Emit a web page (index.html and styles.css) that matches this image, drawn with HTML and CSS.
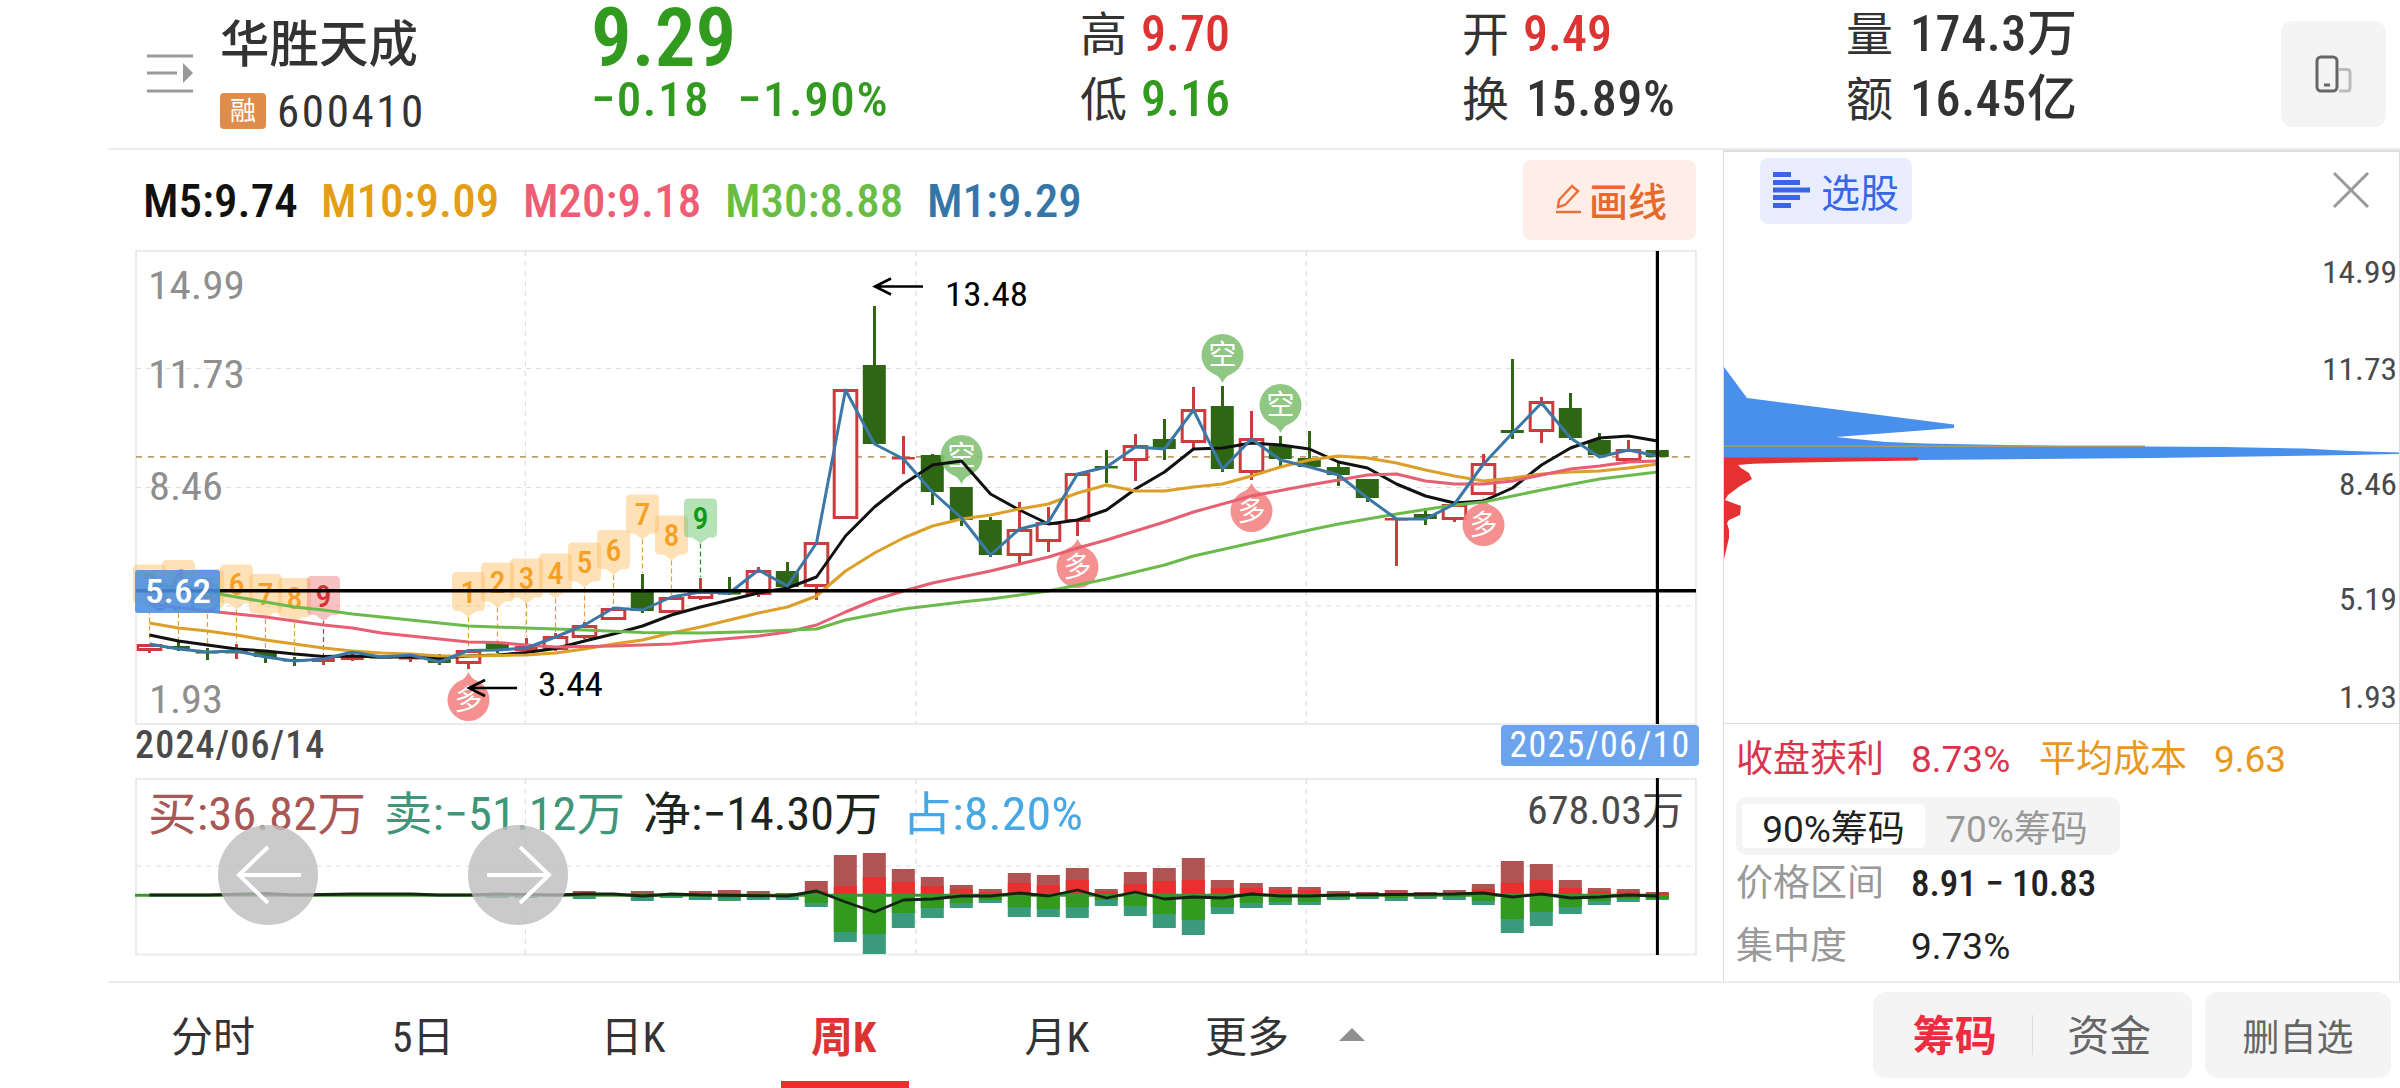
FILE: index.html
```html
<!DOCTYPE html>
<html lang="zh-CN">
    <head>
        <meta charset="UTF-8">
        <meta name="viewport" content="width=device-width, initial-scale=1.0">
        <title>华胜天成 600410</title>
        <link rel="stylesheet" href="styles.css">
    </head>
    <body>
        <div id="App">
            <header class="Header">
                <svg class="MenuIcon" viewBox="0 0 46 40">
                    <path d="M0 3H46M0 20H30M0 38H46" stroke="#999999" stroke-width="3"/>
                    <path d="M36 10L46 20L36 30Z" fill="#999999"/>
                </svg>
                <div class="Stock">
                    <h1 class="Name">华胜天成</h1>
                    <div class="Code"><span class="Tag">融</span><span>600410</span></div>
                </div>
                <div class="Price Down">
                    <div class="Last">9.29</div>
                    <div class="Change"><span>−0.18</span><span>−1.90%</span></div>
                </div>
                <div class="Stat">
                    <div><label>高</label><b class="Up">9.70</b></div>
                    <div><label>低</label><b class="Down">9.16</b></div>
                </div>
                <div class="Stat">
                    <div><label>开</label><b class="Up">9.49</b></div>
                    <div><label>换</label><b class="Wide">15.89%</b></div>
                </div>
                <div class="Stat">
                    <div><label>量</label><b class="Wide">174.3万</b></div>
                    <div><label>额</label><b class="Wide">16.45亿</b></div>
                </div>
                <button class="Rotate">
                    <svg width="38" height="38" viewBox="0 0 38 38" fill="none">
                        <path d="M24 14.5H32Q35 14.5 35 17.5V33Q35 36 32 36H24" stroke="#bbbbbb" stroke-width="3"/>
                        <rect x="2" y="2" width="20" height="34" rx="4" stroke="#666666" stroke-width="3"/>
                        <path d="M9 30H15" stroke="#666666" stroke-width="3"/>
                    </svg>
                </button>
            </header>
            <main class="Main">
                <section class="Left">
                    <div class="Averages">
                        <span class="M5">M5:9.74</span>
                        <span class="M10">M10:9.09</span>
                        <span class="M20">M20:9.18</span>
                        <span class="M30">M30:8.88</span>
                        <span class="M1">M1:9.29</span>
                        <button class="Draw">
                            <svg width="28" height="32" viewBox="0 0 28 32" fill="none" stroke="#e9713a" stroke-width="2.5">
                                <path d="M4 24L5 17L18 3L24 8L11 22Z"/>
                                <path d="M2 29H27"/>
                            </svg>
                            画线
                        </button>
                    </div>
                    <svg id="KChart" class="KChart" viewBox="132 250 1570 475"></svg>
                    <div class="Dates">
                        <span class="From">2024/06/14</span>
                        <span class="To">2025/06/10</span>
                    </div>
                    <svg id="Volume" class="Volume" viewBox="132 777 1570 180"></svg>
                </section>
                <aside class="Chips">
                    <div class="ChipsHead">
                        <button class="Pick">
                            <svg width="38" height="36" viewBox="0 0 38 36" stroke="#3a66e6" stroke-width="5">
                                <path d="M0 2.5H18M0 10.5H27M0 18H37M0 25.5H27M0 33.5H18"/>
                            </svg>
                            选股
                        </button>
                        <svg class="Close" width="38" height="38" viewBox="0 0 38 38">
                            <path d="M2 2L36 36M36 2L2 36" stroke="#999999" stroke-width="3"/>
                        </svg>
                    </div>
                    <svg id="Spread" class="Spread" viewBox="1724 240 675 483"></svg>
                    <div class="ChipsInfo">
                        <div class="Row">
                            <span class="Key Profit">收盘获利</span><span class="Value Profit">8.73%</span>
                            <span class="Key Cost">平均成本</span><span class="Value Cost">9.63</span>
                        </div>
                        <div class="Segment">
                            <span class="Active">90%筹码</span>
                            <span>70%筹码</span>
                        </div>
                        <div class="Row Range">
                            <span class="Key">价格区间</span><span class="Value Strong">8.91 − 10.83</span>
                        </div>
                        <div class="Row Focus">
                            <span class="Key">集中度</span><span class="Value">9.73%</span>
                        </div>
                    </div>
                </aside>
            </main>
            <footer class="Footer">
                <nav class="Tabs">
                    <a>分时</a>
                    <a>5日</a>
                    <a>日K</a>
                    <a class="Selected">周K</a>
                    <a class="Month">月K</a>
                    <a>更多</a>
                    <i class="Caret"></i>
                </nav>
                <div class="Switch">
                    <span class="On">筹码</span>
                    <span>资金</span>
                </div>
                <button class="Remove">删自选</button>
            </footer>
        </div>
        <script src="chart.js"></script>
    </body>
</html>
```

FILE: styles.css
```css
* {
    box-sizing: border-box;
    margin: 0px;
    padding: 0px;
}
body {
    background-color: #FFFFFF;
    color: #333333;
    font-family: Roboto, "Noto Sans CJK SC", sans-serif;
    font-stretch: 87%;
    overflow: hidden;
}
button {
    align-items: center;
    border: none;
    display: flex;
    font-family: inherit;
    justify-content: center;
}
svg {
    display: block;
    flex-shrink: 0;
}
svg text {
    font-family: Roboto, "Noto Sans CJK SC", sans-serif;
}
#App {
    display: flex;
    flex-direction: column;
    height: 1088px;
    width: 2400px;
}
.Up {
    color: #DD3333;
}
.Down {
    color: #319A1F;
}
.Header {
    display: grid;
    grid-template-columns: 73px 371px 489px 382px 384px 435px 105px;
    height: 148px;
    padding-left: 147px;
    .MenuIcon {
        height: 40px;
        margin-top: 53px;
        width: 46px;
    }
    .Name {
        font-size: 49.5px;
        font-weight: 500;
        line-height: 60px;
        padding-top: 15px;
    }
    .Code {
        align-items: center;
        display: flex;
        font-size: 45px;
        gap: 11px;
        height: 72px;
        letter-spacing: 2.6px;
    }
    .Tag {
        background-color: #E08C4A;
        border-radius: 4px;
        color: #FFFFFF;
        font-size: 26px;
        height: 36px;
        letter-spacing: 0px;
        line-height: 36px;
        text-align: center;
        width: 46px;
    }
    .Price {
        font-weight: 500;
    }
    .Last {
        font-size: 81px;
        font-stretch: 83%;
        font-weight: 600;
        line-height: 77px;
    }
    .Change {
        display: flex;
        font-size: 49px;
        gap: 27px;
        letter-spacing: 1.6px;
        line-height: 46px;
    }
    .Stat {
        font-size: 50px;
        line-height: 65px;
        padding-top: 2px;
        div {
            display: flex;
        }
        label {
            font-size: 47px;
            width: 61px;
        }
        b {
            font-weight: 500;
        }
        .Wide {
            letter-spacing: 0.6px;
            padding-left: 3px;
        }
    }
    .Rotate {
        background-color: #F4F4F4;
        border-radius: 12px;
        height: 106px;
        margin-top: 21px;
        svg {
            margin-top: -1px;
        }
    }
}
.Main {
    border-bottom: 2px solid #ECECEC;
    border-top: 2px solid #ECECEC;
    display: flex;
    height: 835px;
    margin-left: 108px;
}
.Left {
    width: 1615px;
}
.Averages {
    align-items: center;
    display: grid;
    font-size: 47px;
    font-weight: 500;
    grid-template-columns: 178px 202px 202px 202px 596px 173px;
    height: 100px;
    padding-left: 35px;
    .M5 {
        color: #111111;
    }
    .M10 {
        color: #E49E14;
    }
    .M20 {
        color: #EE5D73;
    }
    .M30 {
        color: #69BD45;
    }
    .M1 {
        color: #3476A8;
    }
    .Draw {
        background-color: #FFEEE8;
        border-radius: 8px;
        color: #E66A2C;
        font-size: 39px;
        font-weight: 500;
        gap: 7px;
        height: 80px;
        padding: 0px 0px 3px 2px;
    }
}
.KChart {
    height: 475px;
    margin-left: 24px;
    width: 1570px;
}
.Dates {
    display: flex;
    font-size: 38px;
    height: 52px;
    justify-content: space-between;
    letter-spacing: 1.2px;
    line-height: 41px;
    padding: 0px 24px 0px 27px;
    .From {
        color: #4A4A4A;
        font-weight: 500;
    }
    .To {
        background-color: #6BA3EC;
        border-radius: 4px;
        color: #FFFFFF;
        font-size: 36px;
        height: 41px;
        text-align: center;
        width: 198px;
    }
}
.Volume {
    height: 180px;
    margin-left: 24px;
    width: 1570px;
}
.Chips {
    border: 1px solid #DCDCDC;
    border-bottom: none;
    border-top-width: 2px;
    display: flex;
    flex-direction: column;
    width: 677px;
}
.ChipsHead {
    display: flex;
    height: 88px;
    justify-content: space-between;
    padding: 6px 29px 0px 36px;
    .Pick {
        background-color: #E8EEFF;
        border-radius: 8px;
        color: #3A66E6;
        font-size: 39px;
        gap: 10px;
        height: 66px;
        padding-bottom: 2px;
        width: 152px;
    }
    .Close {
        margin-top: 13px;
    }
}
.Spread {
    height: 483px;
    width: 675px;
}
.ChipsInfo {
    border-top: 1px solid #DCDCDC;
    display: flex;
    flex: 1;
    flex-direction: column;
    font-size: 37px;
    padding: 4px 0px 0px 12px;
    .Row {
        display: flex;
        height: 64px;
        line-height: 64px;
    }
    .Range {
        height: 56px;
        line-height: 58px;
    }
    .Focus {
        height: 70px;
        line-height: 72px;
    }
    .Key {
        color: #999999;
        width: 175px;
    }
    .Value {
        color: #222222;
        font-stretch: 100%;
        width: 128px;
    }
    .Strong {
        font-stretch: 87%;
        font-weight: 500;
        white-space: nowrap;
    }
    .Profit {
        color: #D9344B;
    }
    .Cost {
        color: #E9981F;
    }
    .Segment {
        background-color: #F4F4F4;
        border-radius: 10px;
        color: #999999;
        display: flex;
        font-stretch: 100%;
        height: 58px;
        line-height: 52px;
        margin-top: 5px;
        padding: 7px 6px;
        width: 384px;
        span {
            border-radius: 4px;
            flex: 1;
            height: 44px;
            padding-right: 6px;
            text-align: center;
            white-space: nowrap;
        }
        .Active {
            background-color: #FFFFFF;
            color: #222222;
            padding: 0px;
        }
    }
}
.Footer {
    display: flex;
    font-size: 42px;
    height: 105px;
    padding-left: 168px;
    .Tabs {
        align-items: flex-start;
        display: flex;
        width: 1705px;
        a {
            height: 105px;
            line-height: 109px;
            margin-right: 120px;
            text-align: center;
            white-space: nowrap;
            width: 90px;
        }
        .Selected {
            border-bottom: 7px solid #E93030;
            color: #DD3333;
            font-weight: 700;
            margin: 0px 103px 0px -17px;
            padding-right: 3px;
            width: 128px;
        }
        .Month {
            margin-right: 100px;
        }
    }
    .Caret {
        border-bottom: 13px solid #909090;
        border-left: 13px solid transparent;
        border-right: 13px solid transparent;
        margin: 45px 0px 0px -73px;
    }
    .Switch {
        background-color: #F4F4F4;
        border-radius: 13px;
        color: #666666;
        display: flex;
        height: 86px;
        margin-top: 9px;
        padding: 23px 0px;
        width: 319px;
        span {
            flex: 1;
            height: 40px;
            line-height: 44px;
            padding-right: 6px;
            text-align: center;
        }
        .On {
            border-right: 1px solid #DDDDDD;
            color: #EF2B40;
            font-weight: 700;
            padding: 0px 0px 0px 5px;
        }
    }
    .Remove {
        background-color: #F4F4F4;
        border-radius: 13px;
        color: #666666;
        font-size: 37px;
        height: 86px;
        margin: 9px 0px 0px 13px;
        width: 186px;
    }
}
```

FILE: chart.js
```js
const KChart = document.querySelector('#KChart');
const Volume = document.querySelector('#Volume');
const Spread = document.querySelector('#Spread');
const Red = '#cb3c3c';
const Green = '#2f6613';
const X = (Index) => 149.5 + Index * 29;

// [color, body top, body bottom, high, low]
const Candles = [
    ['r',644,651,644,653],['g',646,649,642,651],['g',651,653,648,660],['r',651,653,644,659],['g',652,657,651,663],
    ['g',659,661,657,666],['r',658,662,657,665],['r',656,660,651,661],['g',656,658,656,658],['r',657,659,655,662],
    ['g',657,663,654,665],['r',650,664,650,669],['g',642,650,642,653],['r',646,651,638,651],['r',636,650,633,651],
    ['r',625,638,622,639],['r',608,620,608,620],['g',591,611,574,613],['r',597,613,596,613],['r',591,599,578,600],
    ['g',592,594,577,595],['r',570,595,567,597],['g',571,587,562,587],['r',542,587,542,600],['r',389,519,389,519],
    ['g',365,444,306,444],['r',457,459,436,474],['g',455,492,454,505],['g',487,520,487,526],['g',520,555,517,557],
    ['r',529,556,502,564],['r',522,542,507,552],['r',473,522,473,536],['g',466,468,450,483],['r',445,461,434,481],
    ['g',439,449,419,460],['r',409,443,387,448],['g',406,469,386,472],['r',438,473,411,480],['g',446,459,436,466],
    ['g',458,467,431,467],['g',467,475,463,486],['g',479,498,479,502],['r',518,520,518,566],['g',514,519,508,525],
    ['r',504,520,504,522],['r',463,495,454,495],['g',430,433,359,439],['r',401,432,397,443],['g',408,438,393,440],
    ['g',440,455,433,455],['r',449,461,440,461],['g',450,457,450,457]
];
// y of each average line: every point is [index, y]
const M5 = [635,641,645,649,651,654,656.5,656,657,657,658,656,655,652.5,648.5,641,634,626,615,607,600,593,588,577,536,507,484,465,461,494,510,524,520,510,489,472,449,448,443,445,449,462,468,484,496,503,501,488,465,448,438,436,441].map((Y, I) => [I, Y]);
const M10 = [623,628,631,635,640,644,648,651,653,654,656,656,655.5,655,653,649,644,640,633,627,620,613,607,596,571,553,538,526,519,515,509,504,493,485,491,491,487,484,476,467,460,456,458,463,470,476,481,478,474,472,471,468,464].map((Y, I) => [I, Y]);
const M20 = [[0,604],[2,611],[3,614],[4,617],[5,621],[6,625],[7,628],[8,633],[9,636],[11,642],[12,642.5],[13,645],[14,647],[16,646],[18,644],[19,641],[21,636],[22,632],[23,625],[24,612],[25,600],[26,591],[27,583],[29,571],[31,557],[32,548],[33,540],[35,522],[36,512],[38,496],[40,485],[41,480],[42,475],[43,474],[44,481],[45,484],[46,484],[47,481],[48,475],[49,469],[50,466],[51,462],[52,461]];
const M30 = [[0,584],[2,592],[3,597],[4,602],[5,607],[6,610],[7,614],[9,620],[11,626],[13,628],[15,630],[17,632.5],[19,633],[21,631.5],[23,629],[24,620],[26,609],[28,602],[29,599],[31,591],[33,579],[35,565],[36,556],[38,543],[40,530],[41,524],[43,514],[45,505],[46,502],[48,490],[50,479],[52,472]];
const M1 = [644,649,652,651,657,661,659,652,657,655,662,650.5,650,648,637,625,608,610,597,592,593,570,586,543,390,444,459,492,518,555,529,522,474,467,447,449,410,469,439,460,467,475,498,519,519,504,464,433,403,438,457,450,456].map((Y, I) => [I, Y]);
// [index, digit, top, stem end, kind]
const Tags = [
    [0,3,564.5,642,'o'],[1,4,560,641,'o'],[2,5,569,647,'o'],[3,6,564.5,643,'o'],[4,7,574,650,'o'],[5,8,578,656,'o'],[6,9,576,656,'r'],
    [11,1,572,650,'o'],[12,2,562.5,641,'o'],[13,3,558.5,637,'o'],[14,4,553.5,632,'o'],[15,5,542.5,621,'o'],[16,6,530,607,'o'],[17,7,494.5,573,'o'],[18,8,515.5,595,'o'],[19,9,498.5,577,'g']
];
const TagColors = { o: ['#ffc069', '#f5a127', '#e0a234'], r: ['#f08080', '#d93030', '#cc3344'], g: ['#67c26a', '#119a11', '#2a8a2a'] };
// [index, center y, side]
const Signals = [[11,700,'多'],[32,567,'多'],[38,511,'多'],[46,525,'多'],[28,456,'空'],[37,355,'空'],[39,405,'空']];
// [index, dark red top, red top, green bottom, teal bottom]
const Bars = [
    [12,894,894,896,898],[13,894,894,896,898],[15,891,893,896,899],[17,891,893,897,901],[18,894,894,896,898],[19,891,893,897,900],[20,890,893,898,901],[21,891,893,897,900],[22,893,893,896,900],
    [23,881,891,903,907],[24,855,886,932,942],[25,853,877,934,954],[26,869,882,913,928],[27,877,886,908,918],[28,885,889,903,908],[29,889,892,900,903],
    [30,873,883,907,917],[31,875,885,909,917],[32,868,880,907,918],[33,889,892,900,906],[34,872,884,906,916],[35,868,881,914,928],[36,858,880,920,935],
    [37,880,888,907,914],[38,883,888,903,908],[39,887,890,902,905],[40,887,890,902,905],[41,891,893,898,900],[42,892,893,897,899],[43,890,893,898,901],
    [44,892,893,897,899],[45,890,893,897,900],[46,884,889,901,905],[47,861,883,919,933],[48,864,880,912,926],[49,880,888,907,914],[50,888,891,901,905],[51,889,892,899,902],[52,892,893,899,900]
];
const Net = [[0,895],[2,895],[4,893.5],[5,895],[7,894],[9,894],[10,895],[11,895],[12,894],[14,895],[15,894],[16,894],[17,896],[18,894],[19,895],[22,896],[23,891],[24,902],[25,912],[26,900],[27,899],[28,896],[29,896],[30,893],[31,896],[32,890],[33,898],[34,892],[35,899],[36,897],[37,898],[38,894],[39,896],[40,896],[41,895],[45,894],[46,893],[47,897],[48,894],[49,898],[50,897],[51,895],[52,896]];

const Line = (X1, Y1, X2, Y2, Color, Width, Dash = '') =>
    `<line x1="${X1}" y1="${Y1}" x2="${X2}" y2="${Y2}" stroke="${Color}" stroke-width="${Width}" stroke-dasharray="${Dash}"/>`;
const Rect = (Left, Top, Width, Height, Color) =>
    `<rect x="${Left}" y="${Top}" width="${Width}" height="${Height}" fill="${Color}"/>`;
const Text = (Left, Base, Size, Width, Color, Value, Weight = 400) =>
    `<text x="${Left}" y="${Base}" font-size="${Size}" fill="${Color}" font-weight="${Weight}" textLength="${Width}" lengthAdjust="spacingAndGlyphs">${Value}</text>`;
const Poly = (Points, Color, Width = 3) =>
    `<polyline points="${Points.map(([I, Y]) => X(I) + ',' + Y).join(' ')}" fill="none" stroke="${Color}" stroke-width="${Width}" stroke-linejoin="round"/>`;
const Grid = (Top, Bottom, Rows) => {
    let Out = '';
    [525.3, 916, 1306.3].forEach((Col) => { Out += Line(Col, Top, Col, Bottom, '#dddddd', 1.2, '5 5'); });
    Rows.forEach((Row) => { Out += Line(136, Row, 1696, Row, '#dddddd', 1.2, '5 5'); });
    return Out + `<rect x="136" y="${Top}" width="1560" height="${Bottom - Top}" fill="none" stroke="#ebebeb" stroke-width="2"/>`;
};

const DrawKChart = () => {
    let Out = Grid(251, 724, [368.5, 487.5, 606]);
    Out += Line(136, 456.8, 1696, 456.8, '#bf9f6c', 1.8, '6 6');
    Out += Text(148, 299, 39, 97, '#8f8f8f', '14.99') + Text(148, 388, 39, 97, '#8f8f8f', '11.73');
    Out += Text(149, 500, 39, 74, '#8f8f8f', '8.46') + Text(149, 611, 39, 74, '#8f8f8f', '5.19') + Text(149, 713, 39, 74, '#8f8f8f', '1.93');
    Candles.forEach(([Kind, Top, Bottom, High, Low], I) => {
        let Color = Kind === 'r' ? Red : Green;
        Out += Line(X(I), High, X(I), Top, Color, 3) + Line(X(I), Bottom, X(I), Low, Color, 3);
        if (Kind === 'g' || Bottom - Top < 6) {
            Out += Rect(X(I) - 11.7, Top, 23, Math.max(Bottom - Top, 2.5), Color);
        } else {
            Out += `<rect x="${X(I) - 11.3}" y="${Top + 1.5}" width="22.6" height="${Bottom - Top - 3}" fill="#ffffff" stroke="${Color}" stroke-width="3"/>`;
        }
    });
    Tags.forEach(([I, Digit, Top, End, Kind]) => {
        let [Fill, Ink, Stem] = TagColors[Kind];
        let C = X(I);
        Out += Line(C, Top + 45, C, End, Stem, 1.2, '5 3');
        Out += `<path d="M${C - 12} ${Top}H${C + 12}Q${C + 16.5} ${Top} ${C + 16.5} ${Top + 5}V${Top + 34}Q${C + 16.5} ${Top + 39} ${C + 12} ${Top + 39}H${C + 8}L${C} ${Top + 45}L${C - 8} ${Top + 39}H${C - 12}Q${C - 16.5} ${Top + 39} ${C - 16.5} ${Top + 34}V${Top + 5}Q${C - 16.5} ${Top} ${C - 12} ${Top}Z" fill="${Fill}" opacity="0.48"/>`;
        Out += `<text x="${C}" y="${Top + 30.5}" font-size="32" font-weight="500" fill="${Ink}" text-anchor="middle">${Digit}</text>`;
    });
    Signals.forEach(([I, Y, Side]) => {
        let C = X(I);
        let Dir = Side === '多' ? -1 : 1;
        let Fill = Side === '多' ? '#f58484' : '#83c276';
        Out += `<g opacity="0.9"><circle cx="${C}" cy="${Y}" r="21" fill="${Fill}"/>`;
        Out += `<path d="M${C - 11} ${Y + Dir * 17}Q${C - 3} ${Y + Dir * 21} ${C} ${Y + Dir * 28}Q${C + 3} ${Y + Dir * 21} ${C + 11} ${Y + Dir * 17}Z" fill="${Fill}"/>`;
        Out += `<text x="${C}" y="${Y + 10}" font-size="28" fill="#ffffff" text-anchor="middle">${Side}</text></g>`;
    });
    Out += Poly(M5, '#111111') + Poly(M10, '#dca02a') + Poly(M20, '#e65f72') + Poly(M30, '#6cba4c') + Poly(M1, '#3b78a6');
    Out += '<path d="M923 286.5H875M891 278.5L875 286.5L891 294.5M517 688H469M485 680L469 688L485 696" fill="none" stroke="#000000" stroke-width="2.6"/>';
    Out += Text(945, 306, 34, 83, '#000000', '13.48') + Text(538, 696, 34, 65, '#000000', '3.44');
    Out += Line(136, 590.7, 1696, 590.7, '#000000', 3.4) + Line(1657.4, 251, 1657.4, 724, '#000000', 3.2);
    Out += '<rect x="135" y="570" width="85" height="43" rx="3" fill="#4a90e2" opacity="0.88"/>';
    Out += Text(145, 603, 34, 66, '#ffffff', '5.62', 500);
    KChart.innerHTML = Out;
};

const DrawVolume = () => {
    let Out = Grid(779, 954.5, [866]);
    Out += Text(148, 830, 46, 218, '#a85755', '买:36.82万') + Text(384, 830, 46, 241, '#3f9678', '卖:−51.12万');
    Out += Text(643, 830, 46, 239, '#1c241c', '净:−14.30万') + Text(902, 830, 46, 181, '#47a8e5', '占:8.20%');
    Out += Text(1527, 824, 39, 157, '#4a4a4a', '678.03万');
    Bars.forEach(([I, Dark, Bright, Bottom, Teal]) => {
        let Left = X(I) - 11.7;
        Out += Rect(Left, Dark, 23, 895 - Dark, '#b05353') + Rect(Left, Bright, 23, 895 - Bright, '#e93030');
        Out += Rect(Left, 895, 23, Teal - 895, '#3a9a7c') + Rect(Left, 895, 23, Bottom - 895, '#329b1d');
    });
    Out += Line(135, 895.2, 1658, 895.2, '#3f9430', 3) + Poly(Net, '#132612', 2.8);
    Out += Line(1657.4, 778, 1657.4, 955, '#000000', 3);
    Out += '<g opacity="0.8"><circle cx="268" cy="875" r="50" fill="#bdbdbd"/><circle cx="518" cy="875" r="50" fill="#bdbdbd"/></g>';
    Out += '<path d="M301 875H239M268 847L239 875L268 903M487 875H549M520 847L549 875L520 903" fill="none" stroke="#ffffff" stroke-width="4"/>';
    Volume.innerHTML = Out;
};

const DrawSpread = () => {
    let Out = '<path d="M1724 367L1747 398L1954 424.5V428L1836 437L1886 442L1925 443.5L2065 446L2224 447L2304 448.5L2351 451L2400 452.5V454L2350 455L2252 456.5L2154 458L1982 459.5L1918 460H1724Z" fill="#4890ec"/>';
    Out += '<path d="M1724 457.5H1918V460.5L1854 461.5L1790 462.7L1753 463.7L1738 465L1741 468L1749 473L1752 479L1740 486L1728 495L1725 500L1741 506L1740 515L1729 520L1727 523L1729 530L1729 538L1724 559Z" fill="#e53131"/>';
    Out += Line(1724, 446.3, 2145, 446.3, '#a59a78', 1.6);
    [['14.99', 283, 75], ['11.73', 380, 75], ['8.46', 495, 58], ['5.19', 610, 58], ['1.93', 708, 58]].forEach(([Value, Base, Width]) => {
        Out += Text(2397 - Width, Base, 31, Width, '#4a4a4a', Value);
    });
    Spread.innerHTML = Out;
};

DrawKChart();
DrawVolume();
DrawSpread();
```
